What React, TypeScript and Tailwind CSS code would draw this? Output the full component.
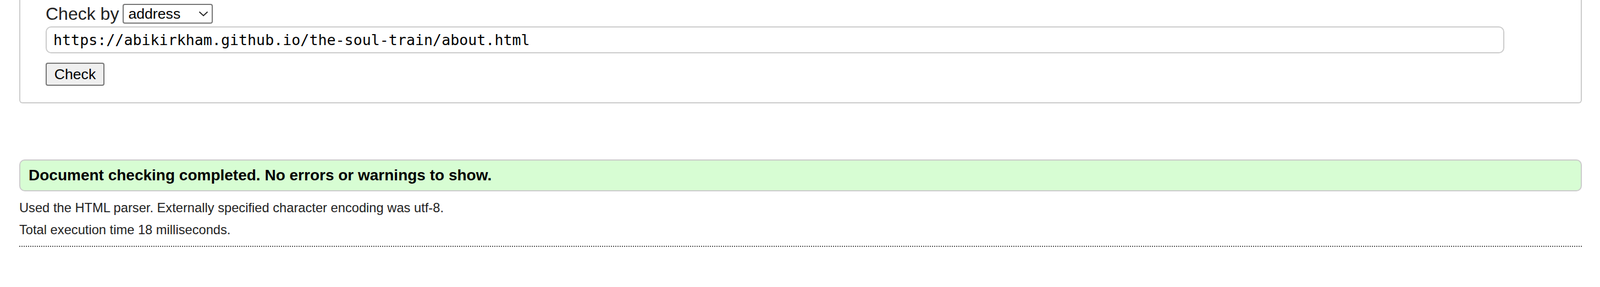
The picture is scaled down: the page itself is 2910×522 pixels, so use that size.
export default function App() {
  return (
    <div className="min-h-screen bg-white font-['Liberation_Sans',Arial,sans-serif] text-[#222]">
      <div className="ml-[35px] mr-[33px]">
        {/* Form fieldset (top edge scrolled off) */}
        <div className="border-x-2 border-b-2 border-[#cbcbcb] rounded-b-[6px] pl-[46px] pt-[7px] pb-[30px]">
          <div className="flex items-center gap-[7px] h-[36px]">
            <span className="text-[32px] leading-none">Check by</span>
            <div className="relative">
              <select
                defaultValue="address"
                className="appearance-none w-[164px] h-[36px] pl-[8px] rounded-[4px] border-2 border-[#767676] bg-white text-black text-[26.67px] leading-none font-['Liberation_Sans',Arial,sans-serif] outline-none"
              >
                <option value="address">address</option>
                <option value="upload">file upload</option>
                <option value="input">text input</option>
              </select>
              <svg
                className="pointer-events-none absolute right-[8px] top-[13px] w-[18px] h-[10px]"
                viewBox="0 0 18 10"
                fill="none"
                stroke="#222"
                strokeWidth={1.8}
              >
                <path d="M1.5 1.5 L9 8.5 L16.5 1.5" />
              </svg>
            </div>
          </div>

          <input
            type="text"
            readOnly
            value="https://abikirkham.github.io/the-soul-train/about.html"
            className="block mt-[5px] w-[2653px] h-[49px] px-[12px] rounded-[10px] border-2 border-[#cbcbcb] bg-white text-black text-[26.67px] font-['DejaVu_Sans_Mono','Liberation_Mono',monospace] outline-none"
          />

          <button
            type="button"
            className="block mt-[17px] w-[107px] h-[42px] rounded-[4px] border-2 border-[#767676] bg-[#efefef] text-black text-[26.67px] leading-none"
          >
            Check
          </button>
        </div>

        {/* Result */}
        <div className="mt-[102px] h-[58px] flex items-center px-[15px] rounded-[10px] border-2 border-[#cbcbcb] bg-[#d7fdd3]">
          <h2 className="text-[28px] font-bold text-black leading-[32px]">
            Document checking completed. No errors or warnings to show.
          </h2>
        </div>

        <div className="mt-[10px] text-[23.7px] leading-[40px]">
          <p>Used the HTML parser. Externally specified character encoding was utf-8.</p>
          <p>Total execution time 18 milliseconds.</p>
        </div>

        <hr className="mt-[9px] border-0 border-t-2 border-dotted border-[#555]" />
      </div>
    </div>
  );
}
